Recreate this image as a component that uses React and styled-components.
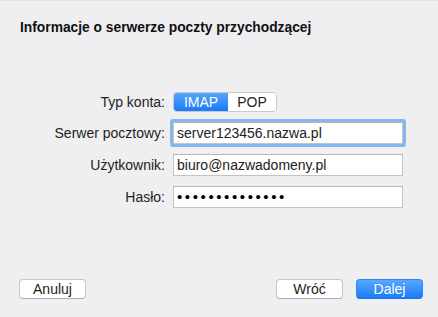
import React from "react";
import styled, { createGlobalStyle } from "styled-components";

const Global = createGlobalStyle`
  html, body {
    margin: 0;
    padding: 0;
    background: #efeef1;
  }
  * {
    box-sizing: border-box;
  }
`;

const Sheet = styled.div`
  width: 438px;
  height: 317px;
  background: #efeef1;
  border-top: 1px solid #e2e2e4;
  font-family: "Liberation Sans", Arial, sans-serif;
  color: #1c1c1c;
  display: flex;
  flex-direction: column;
  padding: 18px 15px 18px 19px;
`;

const Title = styled.h1`
  margin: 0;
  padding-left: 1px;
  font-size: 13.8px;
  line-height: 17px;
  font-weight: bold;
  color: #111;
`;

const Form = styled.div`
  display: grid;
  grid-template-columns: 146px 230px;
  column-gap: 8px;
  row-gap: 10px;
  align-items: center;
  margin-top: 56px;
`;

const Label = styled.label`
  text-align: right;
  font-size: 14px;
  line-height: 16px;
  color: #1e1e1e;
`;

const Segmented = styled.div`
  display: flex;
  width: 104px;
  height: 20px;
  border-radius: 4px;
  border: 1px solid #c8c8c8;
  background: #fff;
  overflow: hidden;
`;

const Segment = styled.button`
  flex: ${(p) => (p.$active ? "0 0 54px" : "1")};
  border: none;
  margin: 0;
  padding: 0;
  font-family: inherit;
  font-size: 14px;
  line-height: 18px;
  color: ${(p) => (p.$active ? "#fff" : "#1e1e1e")};
  background: ${(p) =>
    p.$active ? "linear-gradient(#55a4fb, #1b7af6)" : "#fff"};
`;

const Field = styled.div`
  height: 22px;
  width: 230px;
  background: #fff;
  border: 1px solid #c3c3c3;
  border-top-color: #b8b8b8;
  padding: 0 3px;
  font-size: 14px;
  line-height: 20px;
  color: #222;
  white-space: nowrap;
  overflow: hidden;
  box-shadow: ${(p) =>
    p.$focus ? "0 0 0 3px #86b6f0" : "none"};
  border-radius: ${(p) => (p.$focus ? "1px" : "0")};
`;

const Dots = styled.span`
  font-size: 15px;
  letter-spacing: 2.6px;
  line-height: 20px;
  color: #000;
`;

const Footer = styled.div`
  margin-top: auto;
  display: flex;
  align-items: center;
`;

const Spacer = styled.div`
  flex: 1;
`;

const Button = styled.button`
  width: 67px;
  height: 20px;
  margin: 0;
  margin-left: ${(p) => (p.$gap ? "13px" : "0")};
  padding: 0;
  border-radius: 4px;
  font-family: inherit;
  font-size: 14px;
  line-height: 18px;
  border: 1px solid ${(p) => (p.$primary ? "#2e86f7" : "#c6c6c6")};
  border-bottom-color: ${(p) => (p.$primary ? "#1f74e8" : "#adadad")};
  color: ${(p) => (p.$primary ? "#fff" : "#1e1e1e")};
  background: ${(p) =>
    p.$primary ? "linear-gradient(#5aa8fc, #1a7bf7)" : "#fff"};
`;

export default function App() {
  return (
    <>
      <Global />
      <Sheet>
        <Title>Informacje o serwerze poczty przychodzącej</Title>
        <Form>
          <Label>Typ konta:</Label>
          <Segmented>
            <Segment $active>IMAP</Segment>
            <Segment>POP</Segment>
          </Segmented>

          <Label>Serwer pocztowy:</Label>
          <Field $focus>server123456.nazwa.pl</Field>

          <Label>Użytkownik:</Label>
          <Field>biuro@nazwadomeny.pl</Field>

          <Label>Hasło:</Label>
          <Field>
            <Dots>{"••••••••••••••"}</Dots>
          </Field>
        </Form>
        <Footer>
          <Button>Anuluj</Button>
          <Spacer />
          <Button>Wróć</Button>
          <Button $primary $gap>
            Dalej
          </Button>
        </Footer>
      </Sheet>
    </>
  );
}
